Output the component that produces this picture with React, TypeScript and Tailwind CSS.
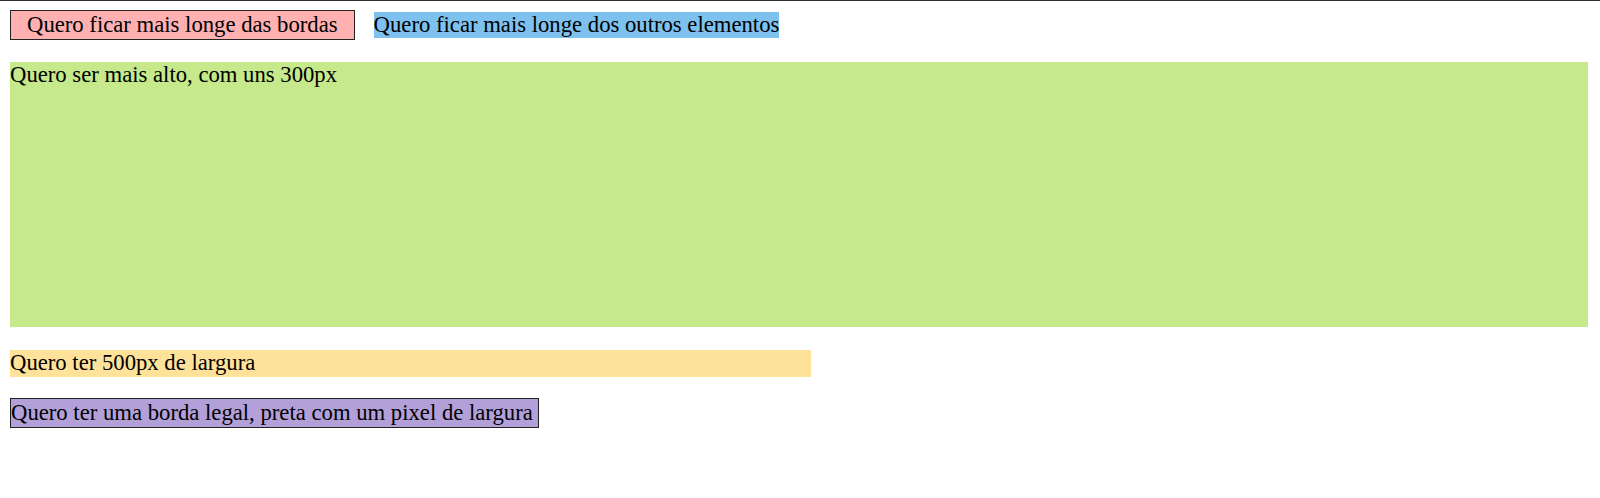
import React from 'react';

const App: React.FC = () => {
  return (
    <div className="min-h-[498px] w-[1600px] bg-white border-t border-[#2e2e2e] font-['Liberation_Serif','Times_New_Roman',serif] text-[22.7px] leading-[26px] text-black">
      <div className="px-[10px] pt-[9px]">
        <div className="flex items-center">
          <span className="border border-[#222] bg-[#ffb0b0] px-[16px] py-[1px]">
            Quero ficar mais longe das bordas
          </span>
          <span className="ml-[19px] bg-[#7dc1ef]">Quero ficar mais longe dos outros elementos</span>
        </div>

        <div className="mt-[22px] h-[265px] w-[1578px] bg-[#c5e98b]">Quero ser mais alto, com uns 300px</div>

        <div className="mt-[23px] h-[27px] w-[801px] bg-[#ffe29a]">Quero ter 500px de largura</div>

        <div className="mt-[21px] flex">
          <div className="h-[30px] w-[529px] border border-[#222] bg-[#b3a0d9] leading-[28px] whitespace-nowrap">
            Quero ter uma borda legal, preta com um pixel de largura
          </div>
        </div>
      </div>
    </div>
  );
};

export default App;
